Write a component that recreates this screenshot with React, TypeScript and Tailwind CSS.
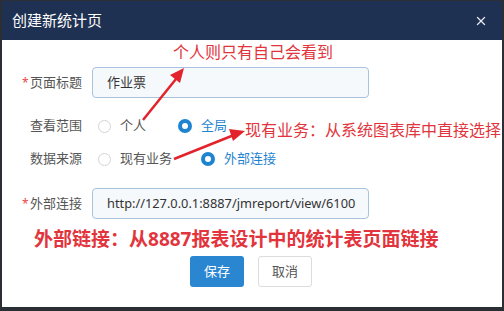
import React from 'react'
import { X } from 'lucide-react'

const font = { fontFamily: '"Noto Sans", "Noto Sans CJK SC", sans-serif' }

const Radio: React.FC<{ checked?: boolean; label: string }> = ({ checked, label }) => (
  <label className="flex items-center gap-[9px]">
    {checked ? (
      <span className="w-[14px] h-[14px] rounded-full border-[4px] border-[#1f84d0] bg-white" />
    ) : (
      <span className="w-[13px] h-[13px] rounded-full border border-[#d4d4d4] bg-white" />
    )}
    <span className={checked ? 'text-[#1f84d0]' : 'text-[#555]'}>{label}</span>
  </label>
)

const Label: React.FC<{ required?: boolean; text: string }> = ({ required, text }) => (
  <div className="w-[70px] flex items-center shrink-0">
    <span className="w-[8px] text-[#e8474a] text-[12px]">{required ? '*' : ''}</span>
    <span className="text-[#555]">{text}</span>
  </div>
)

export default function App() {
  return (
    <div className="w-[504px] h-[311px] bg-[#2b2f33] pl-[2px] pr-[2px] pt-[1px] pb-[4px]" style={font}>
      <div className="h-full flex flex-col bg-white">
        <div className="h-[39px] shrink-0 bg-[#1f3152] flex items-center justify-between pl-[10px] pr-[14px]">
          <span className="text-white text-[15px]">创建新统计页</span>
          <X className="w-[14px] h-[14px] text-[#e6e9ef]" strokeWidth={2.2} />
        </div>

        <div className="relative flex-1 text-[13px]">
          <div className="pt-[2px] pl-[171px] text-[16px] leading-[20px] text-[#e2343c]">个人则只有自己会看到</div>

          <div className="pl-[20px] mt-[5px] flex flex-col">
            <div className="flex items-center h-[31px]">
              <Label required text="页面标题" />
              <div className="w-[277px] h-[31px] rounded-[4px] border border-[#a9c3dc] bg-[#f6f9fc] flex items-center pl-[14px] text-[#333]">
                作业票
              </div>
            </div>

            <div className="flex items-center h-[22px] mt-[17px]">
              <Label text="查看范围" />
              <div className="flex items-center gap-[32px] pl-[6px]">
                <Radio label="个人" />
                <Radio checked label="全局" />
              </div>
            </div>

            <div className="flex items-center h-[22px] mt-[11px]">
              <Label text="数据来源" />
              <div className="flex items-center gap-[29px] pl-[6px]">
                <Radio label="现有业务" />
                <Radio checked label="外部连接" />
              </div>
            </div>

            <div className="flex items-center h-[31px] mt-[18px]">
              <Label required text="外部连接" />
              <div className="w-[277px] h-[31px] rounded-[4px] border border-[#a9c3dc] bg-[#f6f9fc] flex items-center pl-[14px] text-[12.8px] text-[#333]">
                http://127.0.0.1:8887/jmreport/view/6100
              </div>
            </div>
          </div>

          <div className="mt-[6px] pl-[32px] text-[19px] leading-[28px] font-semibold text-[#e2343c] whitespace-nowrap">
            外部链接：从<span className="font-bold">8887</span>报表设计中的统计表页面链接
          </div>

          <div className="mt-[3px] flex justify-center gap-[14px] pr-[2px]">
            <button className="w-[54px] h-[31px] rounded-[3px] bg-[#2a86d0] text-white">保存</button>
            <button className="w-[54px] h-[31px] rounded-[3px] border border-[#dcdcdc] bg-white text-[#555]">取消</button>
          </div>

          <div className="absolute left-[243px] top-[80px] text-[16px] leading-[20px] text-[#e2343c] whitespace-nowrap">
            现有业务：从系统图表库中直接选择
          </div>

          <svg className="absolute left-0 top-0 pointer-events-none" width="500" height="267">
            <line x1="141" y1="80" x2="178" y2="34" stroke="#e2232b" strokeWidth="2.5" />
            <polygon points="182,28 168,35 178,43" fill="#e2232b" />
            <line x1="172" y1="119" x2="232" y2="95" stroke="#e2232b" strokeWidth="2.5" />
            <polygon points="243,91 227,89 231,101" fill="#e2232b" />
          </svg>
        </div>
      </div>
    </div>
  )
}
